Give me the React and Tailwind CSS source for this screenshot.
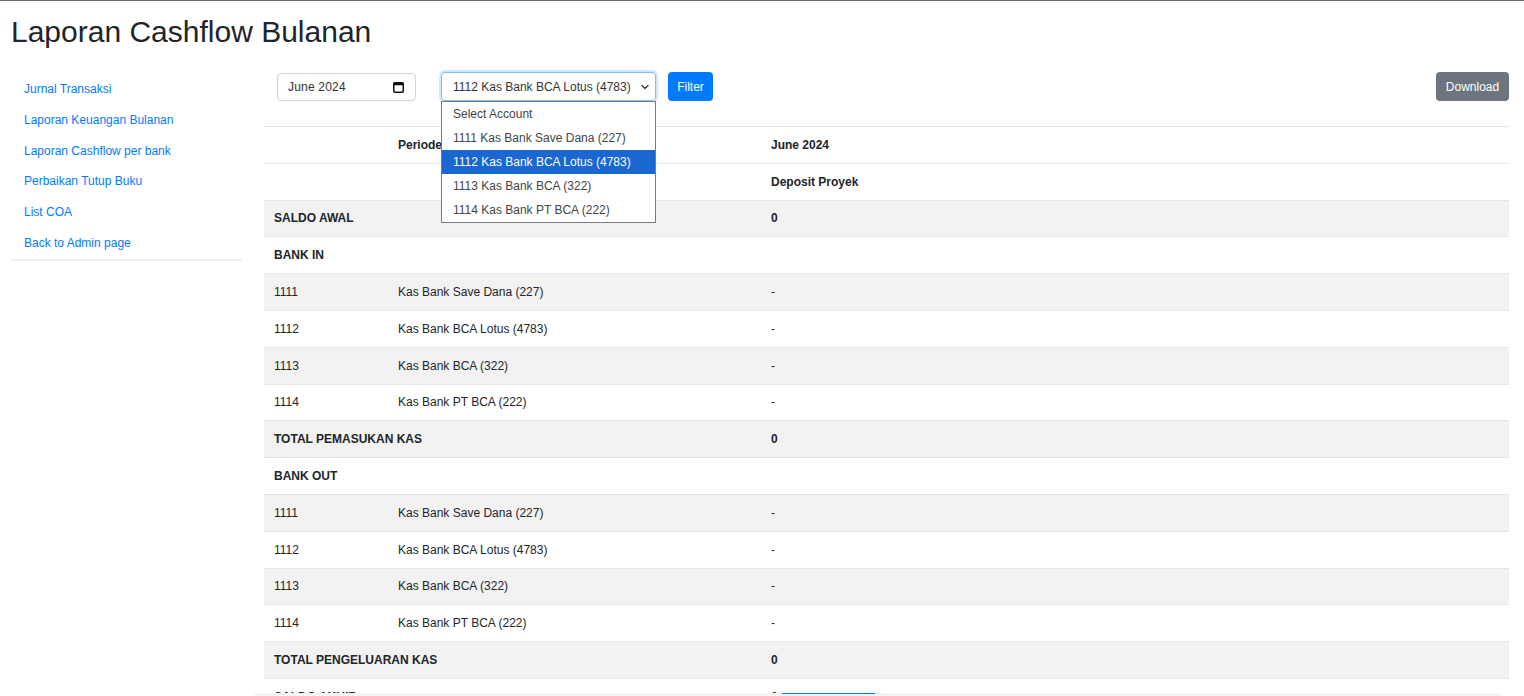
import { ChevronDown } from 'lucide-react'

const links = [
  'Jurnal Transaksi',
  'Laporan Keuangan Bulanan',
  'Laporan Cashflow per bank',
  'Perbaikan Tutup Buku',
  'List COA',
  'Back to Admin page'
]

const accounts = [
  ['1111', 'Kas Bank Save Dana (227)'],
  ['1112', 'Kas Bank BCA Lotus (4783)'],
  ['1113', 'Kas Bank BCA (322)'],
  ['1114', 'Kas Bank PT BCA (222)']
]

const options = [
  'Select Account',
  '1111 Kas Bank Save Dana (227)',
  '1112 Kas Bank BCA Lotus (4783)',
  '1113 Kas Bank BCA (322)',
  '1114 Kas Bank PT BCA (222)'
]

// rows of the body: [type, col1, col2, col3]
const rows = [
  ['bold', 'SALDO AWAL', '', '0'],
  ['bold', 'BANK IN', '', ''],
  ...accounts.map(([c, n]) => ['plain', c, n, '-']),
  ['bold', 'TOTAL PEMASUKAN KAS', '', '0'],
  ['bold', 'BANK OUT', '', ''],
  ...accounts.map(([c, n]) => ['plain', c, n, '-']),
  ['bold', 'TOTAL PENGELUARAN KAS', '', '0'],
  ['bold', 'SALDO AKHIR', '', '0']
]

function CalendarIcon() {
  return (
    <svg width="11" height="12" viewBox="0 0 11 12" className="text-[#111]">
      <rect x="0.75" y="1.75" width="9.5" height="9.5" rx="1" fill="none" stroke="currentColor" strokeWidth="1.5" />
      <rect x="0.75" y="1.75" width="9.5" height="2.5" fill="currentColor" />
    </svg>
  )
}

export default function App() {
  return (
    <div className="min-h-screen bg-white border-t border-[#6f6f6f] font-['Liberation_Sans',Arial,sans-serif] text-[#212529]">
      <div className="pl-[11px] pr-[15px]">

        {/* Title */}
        <h2 className="mt-[13px] text-[30px] leading-[36px] font-normal">
          Laporan Cashflow Bulanan
        </h2>

        <div className="flex mt-[22px]">

          {/* Sidebar */}
          <div className="w-[231px] shrink-0">
            <ul className="border-b-2 border-[#eeeeee] pt-[2px]">
              {links.map((l) => (
                <li key={l} className="h-[30.8px] leading-[30.8px] pl-[13px] text-[12px] text-[#007bff]">
                  {l}
                </li>
              ))}
            </ul>
          </div>

          {/* Main */}
          <div className="flex-1 ml-[22px]">

            {/* Filters */}
            <div className="flex items-center pl-[13px] h-[29px]">
              <div className="w-[139px] h-[28px] border border-[#ced4da] rounded-[4px] flex items-center justify-between pl-[10px] pr-[11px] text-[12px] text-[#333]">
                <span className="tracking-[0.2px]">June 2024</span>
                <CalendarIcon />
              </div>

              <div className="relative ml-[25px]">
                <div className="w-[215px] h-[29px] border border-[#80bdff] rounded-[4px] shadow-[0_0_0_2px_rgba(0,123,255,0.18)] flex items-center justify-between pl-[11px] pr-[4px] text-[12px] text-[#333]">
                  <span>1112 Kas Bank BCA Lotus (4783)</span>
                  <ChevronDown size={12} strokeWidth={2.5} className="text-[#333]" />
                </div>

                {/* Open dropdown */}
                <div className="absolute left-0 top-[29px] w-[215px] bg-white border border-[#7a7a7a] z-10">
                  {options.map((o, i) => (
                    <div
                      key={o}
                      className={
                        i === 2
                          ? 'h-[24px] leading-[24px] pl-[11px] text-[12px] bg-[#1a67d2] text-white'
                          : 'h-[24px] leading-[24px] pl-[11px] text-[12px] text-[#444]'
                      }
                    >
                      {o}
                    </div>
                  ))}
                </div>
              </div>

              <button className="ml-[12px] w-[45px] h-[29px] rounded-[4px] bg-[#007bff] text-white text-[12px]">
                Filter
              </button>

              <button className="ml-auto w-[73px] h-[29px] rounded-[4px] bg-[#6c757d] text-white text-[12px]">
                Download
              </button>
            </div>

            {/* Table */}
            <table className="w-full mt-[25px] text-[12px] border-collapse table-fixed">
              <colgroup>
                <col className="w-[124px]" />
                <col className="w-[373px]" />
                <col />
              </colgroup>
              <thead>
                <tr className="h-[36.8px] border-t border-[#e4e4e4]">
                  <th className="px-[10px]"></th>
                  <th className="px-[10px] text-left font-bold">Periode</th>
                  <th className="px-[10px] text-left font-bold">June 2024</th>
                </tr>
                <tr className="h-[36.8px] border-t border-[#e4e4e4]">
                  <th className="px-[10px]"></th>
                  <th className="px-[10px]"></th>
                  <th className="px-[10px] text-left font-bold">Deposit Proyek</th>
                </tr>
              </thead>
              <tbody>
                {rows.map((r, i) => (
                  <tr
                    key={i}
                    className={
                      i % 2 === 0
                        ? 'h-[36.8px] border-t border-[#e4e4e4] bg-[#f2f2f2]'
                        : 'h-[36.8px] border-t border-[#e4e4e4] bg-white'
                    }
                  >
                    {r[0] === 'bold' ? (
                      <td colSpan={2} className="px-[10px] font-bold whitespace-nowrap">{r[1]}</td>
                    ) : (
                      <>
                        <td className="px-[10px]">{r[1]}</td>
                        <td className="px-[10px]">{r[2]}</td>
                      </>
                    )}
                    <td className={r[0] === 'bold' ? 'px-[10px] font-bold' : 'px-[10px]'}>{r[3]}</td>
                  </tr>
                ))}
              </tbody>
            </table>

          </div>
        </div>
      </div>

      {/* Bottom scrollbar strip */}
      <div className="fixed bottom-0 left-[255px] right-[24px] h-[3px] bg-[#f3f3f3]">
        <div className="ml-[527px] w-[93px] h-[1px] bg-[#007bff]"></div>
      </div>
    </div>
  )
}
